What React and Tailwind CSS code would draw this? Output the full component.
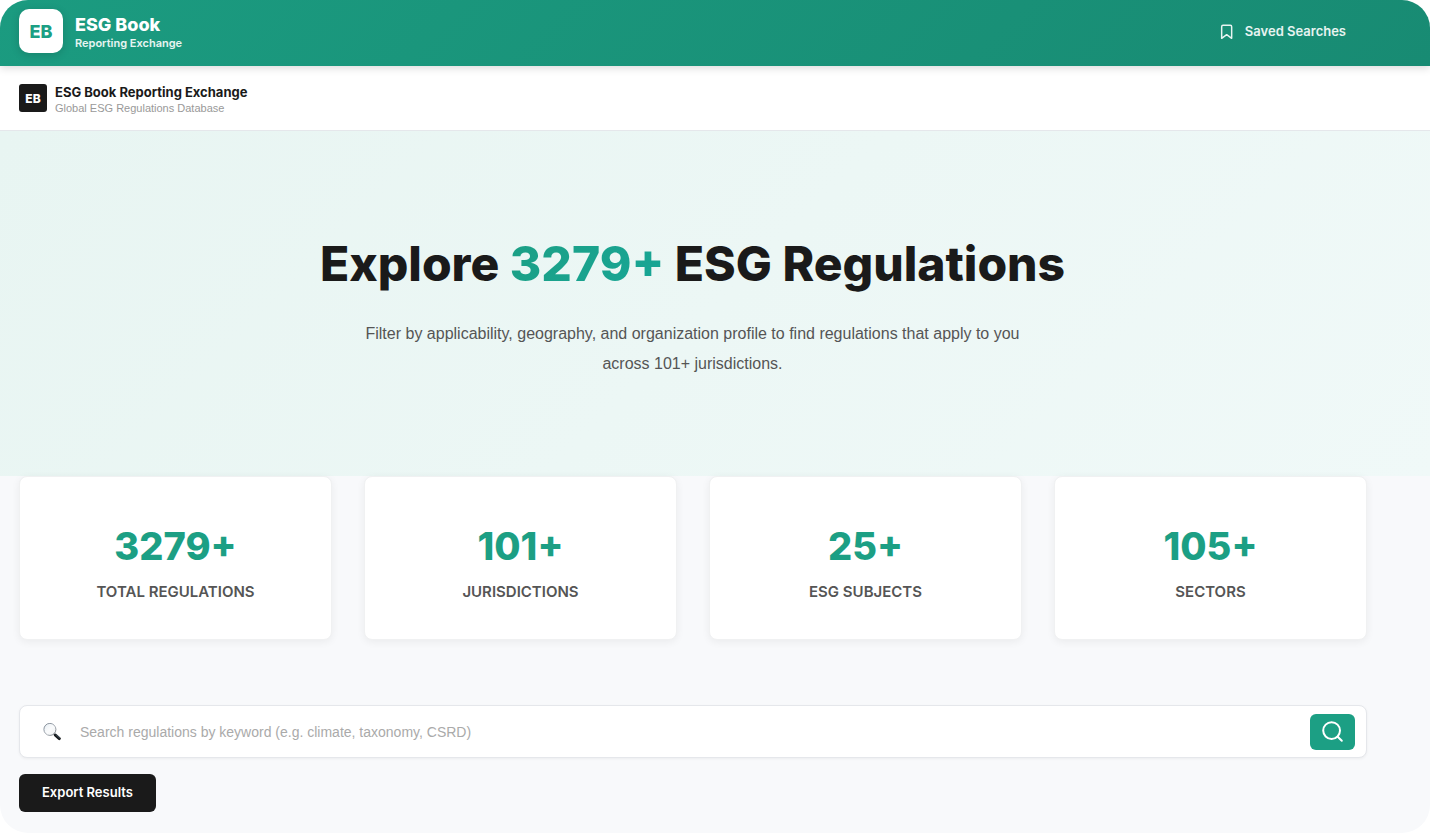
import React from "react";

const stats = [
  { value: "3279+", label: "TOTAL REGULATIONS" },
  { value: "101+", label: "JURISDICTIONS" },
  { value: "25+", label: "ESG SUBJECTS" },
  { value: "105+", label: "SECTORS" },
];

function BookmarkIcon() {
  return (
    <svg viewBox="0 0 24 24" className="size-4" fill="none" stroke="currentColor" strokeWidth="2.2" strokeLinecap="round" strokeLinejoin="round" aria-hidden="true">
      <path d="M19 21.5l-7.5-5.5-7.5 5.5V4a2 2 0 0 1 2-2h11a2 2 0 0 1 2 2z" />
    </svg>
  );
}

function SearchIcon() {
  return (
    <svg viewBox="0 0 24 24" className="size-6" fill="none" stroke="currentColor" strokeWidth="2" strokeLinecap="round" aria-hidden="true">
      <circle cx="10.6" cy="10.6" r="8.4" />
      <path d="M16.7 16.7L20.8 20.8" />
    </svg>
  );
}

function MagnifierGlyph() {
  return (
    <svg viewBox="0 0 18 18" className="size-[18px] shrink-0" fill="none" aria-hidden="true">
      <defs>
        <linearGradient id="lens" x1="0" y1="0" x2="1" y2="1">
          <stop offset="0" stopColor="#e6edf3" />
          <stop offset="0.5" stopColor="#fafbfc" />
          <stop offset="1" stopColor="#eef1f4" />
        </linearGradient>
        <linearGradient id="rim" x1="0" y1="0" x2="1" y2="1">
          <stop offset="0" stopColor="#6b7785" />
          <stop offset="0.6" stopColor="#a3a9b0" />
          <stop offset="1" stopColor="#50565c" />
        </linearGradient>
      </defs>
      <path d="M10.6 10.8L12.6 12.6" stroke="#6d747b" strokeWidth="1.4" />
      <path d="M12.4 12.2L16.3 15.6" stroke="#16191c" strokeWidth="3" strokeLinecap="round" />
      <path d="M13 11.7L16.6 14.9" stroke="#5b7385" strokeWidth="0.7" strokeLinecap="round" />
      <circle cx="6.9" cy="6.4" r="6" fill="url(#lens)" stroke="url(#rim)" strokeWidth="0.9" />
    </svg>
  );
}

export default function App() {
  return (
    <div className="flex min-h-screen flex-col overflow-hidden rounded-[28px] bg-[#f8f9fb] font-['Inter',sans-serif] text-[#1a1a1a]">
      <header className="relative flex h-[66px] items-center justify-between bg-linear-135 from-[#1b9b80] to-[#188b73] pr-[84px] pl-[19px] text-white shadow-[0_2px_8px_rgba(0,0,0,0.15)]">
        <div className="flex items-center gap-3">
          <div className="mb-1 flex size-11 items-center justify-center rounded-[10px] bg-white pt-0.5 text-lg font-extrabold text-[#1c9f84] shadow-[0_2px_8px_rgba(0,0,0,0.15)]">
            EB
          </div>
          <div>
            <div className="text-lg leading-5 font-extrabold">ESG Book</div>
            <div className="text-[11px] leading-4 font-semibold text-white/90">Reporting Exchange</div>
          </div>
        </div>
        <a href="#saved" className="mb-0.5 flex items-center gap-2.5 text-[13px] font-semibold text-white/90">
          <BookmarkIcon />
          Saved Searches
        </a>
      </header>

      <div className="flex h-[65px] items-center gap-2 border-b border-[#e5e7eb] bg-white pl-[19px]">
        <div className="flex size-7 items-center justify-center rounded-[3px] bg-[#1a1a1a] pt-0.5 text-xs font-extrabold text-white">EB</div>
        <div className="pt-1">
          <div className="text-[13px] leading-4 font-bold">ESG Book Reporting Exchange</div>
          <div className="font-['Liberation_Sans',Arial,sans-serif] text-[11px] leading-4 text-[#999999]">Global ESG Regulations Database</div>
        </div>
      </div>

      <section className="bg-linear-135 from-[#e8f5f2] to-[#f0f9f8] pt-[100px] pr-16 pb-[97px] pl-[19px] text-center">
        <h1 className="text-5xl leading-[66px] font-extrabold">
          Explore <span className="bg-linear-135 from-[#1c9f84] to-[#17a697] bg-clip-text text-transparent">3279+</span> ESG Regulations
        </h1>
        <p className="mx-auto mt-[22px] max-w-[700px] font-['Liberation_Sans',Arial,sans-serif] text-base leading-[30px] text-[#555555]">
          Filter by applicability, geography, and organization profile to find regulations that apply to you across 101+ jurisdictions.
        </p>
      </section>

      <main className="pr-[63px] pb-5 pl-[19px]">
        <div className="grid grid-cols-4 gap-8">
          {stats.map((s) => (
            <div key={s.label} className="flex h-[164px] flex-col items-center justify-center gap-3 rounded-lg border border-[#f0f1f2] bg-white pt-2 shadow-[0_2px_8px_rgba(0,0,0,0.06)]">
              <div className="text-[38px] leading-[48px] font-extrabold text-[#1c9f84]">{s.value}</div>
              <div className="text-[15px] leading-5 font-semibold text-[#555555]">{s.label}</div>
            </div>
          ))}
        </div>

        <form className="mt-[65px] flex h-[53px] items-center rounded-lg border border-[#e5e7eb] bg-white pr-[11px] pl-[23px] shadow-[0_1px_3px_rgba(0,0,0,0.05)]" onSubmit={(e) => e.preventDefault()}>
          <MagnifierGlyph />
          <input
            type="search"
            aria-label="Search regulations"
            placeholder="Search regulations by keyword (e.g. climate, taxonomy, CSRD)"
            className="ml-[19px] min-w-0 flex-1 bg-transparent font-['Liberation_Sans',Arial,sans-serif] text-sm outline-none placeholder:text-[#aaaaaa]"
          />
          <button type="submit" aria-label="Search" className="flex h-9 w-[45px] items-center justify-center rounded-md bg-[#1c9f84] text-white">
            <SearchIcon />
          </button>
        </form>

        <button type="button" className="mt-4 h-[38px] rounded-md bg-[#1a1a1a] px-[23px] text-[13px] font-semibold text-white">
          Export Results
        </button>
      </main>
    </div>
  );
}
